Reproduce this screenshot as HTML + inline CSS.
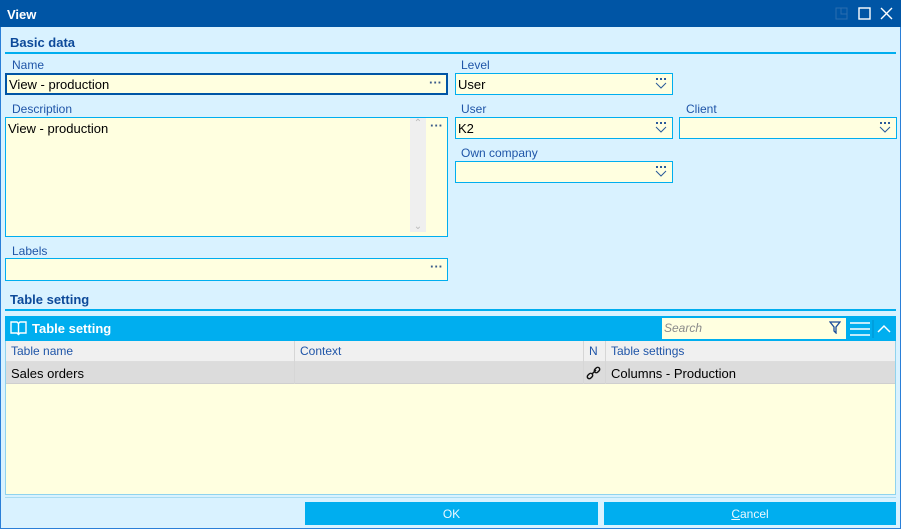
<!DOCTYPE html>
<html><head><style>
*{box-sizing:border-box;margin:0;padding:0}
body{width:901px;height:529px;overflow:hidden;background:#d9f2ff;font-family:"Liberation Sans",sans-serif;font-size:13px;position:relative}
.a{position:absolute}
.win{left:0;top:0;width:901px;height:529px;border:1px solid #2a7fd8}
.title{left:0;top:0;width:901px;height:27px;background:#0055a5;color:#fff;font-weight:bold;font-size:13px;padding:7px 0 0 7px}
.sec{color:#0d4a9a;font-weight:bold;font-size:13px}
.line{height:2px;background:#00aeef}
.lbl{color:#1f55a8;font-size:12px}
.in{background:#ffffe0;border:1px solid #00aeef;font-size:13px;padding:3px 0 0 2px;color:#000}
.dots{position:absolute;right:4px;top:0px;color:#3a5a8a;font-size:13px;font-weight:bold}
.dd{position:absolute;right:5px;top:4px}
.bt{background:#00aeef;color:#eaf8ff;text-align:center;font-size:12px;padding-top:5px}
</style></head><body>
<div class="a win"></div>
<div class="a title">View</div>
<svg class="a" style="left:835px;top:7px" width="60" height="14"><rect x="1" y="1" width="11" height="11" fill="none" stroke="#2a6db0"/><path d="M6 1V7H12" fill="none" stroke="#2a6db0"/><rect x="24" y="1" width="11" height="11" fill="none" stroke="#fff" stroke-width="1.4"/><path d="M46 1L57 12M57 1L46 12" stroke="#fff" stroke-width="1.4"/></svg>
<div class="a sec" style="left:10px;top:35px">Basic data</div>
<div class="a line" style="left:5px;top:52px;width:891px"></div>

<div class="a lbl" style="left:12px;top:58px">Name</div>
<div class="a in" style="left:5px;top:73px;width:443px;height:22px;border:2px solid #0055a5;padding-top:2px">View - production<span class="dots">···</span></div>
<div class="a lbl" style="left:461px;top:58px">Level</div>
<div class="a in" style="left:455px;top:73px;width:218px;height:22px">User<svg class="dd" width="12" height="11"><path d="M1 1h2M5 1h2M9 1h2" stroke="#2a5a9a" stroke-width="2"/><path d="M1 5l5 5 5-5" fill="none" stroke="#2a5a9a"/></svg></div>

<div class="a lbl" style="left:12px;top:102px">Description</div>
<div class="a in" style="left:5px;top:117px;width:443px;height:120px">View - production<span class="dots">···</span>
<div class="a" style="left:404px;top:0;width:16px;height:114px;background:#efefef;color:#bbb;font-size:10px;text-align:center">⌃<div style="position:absolute;bottom:0;width:16px">⌄</div></div></div>
<div class="a lbl" style="left:461px;top:102px">User</div>
<div class="a in" style="left:455px;top:117px;width:218px;height:22px">K2<svg class="dd" width="12" height="11"><path d="M1 1h2M5 1h2M9 1h2" stroke="#2a5a9a" stroke-width="2"/><path d="M1 5l5 5 5-5" fill="none" stroke="#2a5a9a"/></svg></div>
<div class="a lbl" style="left:686px;top:102px">Client</div>
<div class="a in" style="left:679px;top:117px;width:218px;height:22px"><svg class="dd" width="12" height="11"><path d="M1 1h2M5 1h2M9 1h2" stroke="#2a5a9a" stroke-width="2"/><path d="M1 5l5 5 5-5" fill="none" stroke="#2a5a9a"/></svg></div>
<div class="a lbl" style="left:461px;top:146px">Own company</div>
<div class="a in" style="left:455px;top:161px;width:218px;height:22px"><svg class="dd" width="12" height="11"><path d="M1 1h2M5 1h2M9 1h2" stroke="#2a5a9a" stroke-width="2"/><path d="M1 5l5 5 5-5" fill="none" stroke="#2a5a9a"/></svg></div>

<div class="a lbl" style="left:12px;top:244px">Labels</div>
<div class="a in" style="left:5px;top:258px;width:443px;height:23px"><span class="dots">···</span></div>

<div class="a sec" style="left:10px;top:292px">Table setting</div>
<div class="a line" style="left:5px;top:309px;width:891px"></div>
<div class="a" style="left:5px;top:316px;width:891px;height:25px;background:#00aeef"></div>
<svg class="a" style="left:10px;top:320px" width="18" height="17"><path d="M1 2h6l1.5 1.5L10 2h6v11h-6l-1.5 1.5L7 13H1z M8.5 3.5v11" fill="none" stroke="#fff" stroke-width="1.4"/></svg>
<div class="a" style="left:32px;top:321px;color:#fff;font-weight:bold;font-size:13px">Table setting</div>
<div class="a" style="left:662px;top:318px;width:184px;height:21px;background:#ffffe0;color:#8a8a8a;font-style:italic;font-size:12px;padding:3px 0 0 2px">Search
<svg class="a" style="right:5px;top:3px" width="12" height="13"><path d="M1 1h10L7 6v6L5 10V6z" fill="none" stroke="#1a4e9a" stroke-width="1.3"/></svg></div>
<svg class="a" style="left:849px;top:320px" width="48" height="18"><path d="M1 3h20M1 9h20M1 15h20" stroke="#fff" stroke-width="1.4"/><path d="M24 0v18" stroke="#0090cc"/><path d="M29 12l6-6 6 6" fill="none" stroke="#fff" stroke-width="1.5"/></svg>

<div class="a" style="left:5px;top:341px;width:891px;height:154px;background:#ffffe0;border:1px solid #8fd3ee;border-top:0"></div>
<div class="a" style="left:6px;top:341px;width:889px;height:21px;background:#f0f0f0;border-bottom:1px solid #ddd"></div>
<div class="a" style="left:6px;top:362px;width:889px;height:22px;background:#dcdcdc;border-bottom:1px solid #cfcfcf"></div>
<div class="a" style="left:294px;top:341px;width:1px;height:43px;background:#d6d6d6"></div>
<div class="a" style="left:583px;top:341px;width:1px;height:43px;background:#d6d6d6"></div>
<div class="a" style="left:605px;top:341px;width:1px;height:43px;background:#d6d6d6"></div>
<div class="a lbl" style="left:11px;top:344px">Table name</div>
<div class="a lbl" style="left:300px;top:344px">Context</div>
<div class="a lbl" style="left:589px;top:344px">N</div>
<div class="a lbl" style="left:611px;top:344px">Table settings</div>
<div class="a" style="left:11px;top:366px">Sales orders</div>
<svg class="a" style="left:586px;top:366px" width="16" height="14"><rect x="1" y="8" width="6" height="4" rx="2" transform="rotate(-45 4 10)" fill="none" stroke="#111" stroke-width="1.4"/><rect x="8" y="2" width="6" height="4" rx="2" transform="rotate(-45 11 4)" fill="none" stroke="#111" stroke-width="1.4"/><path d="M6 8l4-4" stroke="#111" stroke-width="1.4"/></svg>
<div class="a" style="left:611px;top:366px">Columns - Production</div>

<div class="a" style="left:5px;top:497px;width:891px;height:1px;background:#a8dcf2"></div>
<div class="a bt" style="left:305px;top:502px;width:293px;height:23px">OK</div>
<div class="a bt" style="left:604px;top:502px;width:292px;height:23px"><u>C</u>ancel</div>
</body></html>
